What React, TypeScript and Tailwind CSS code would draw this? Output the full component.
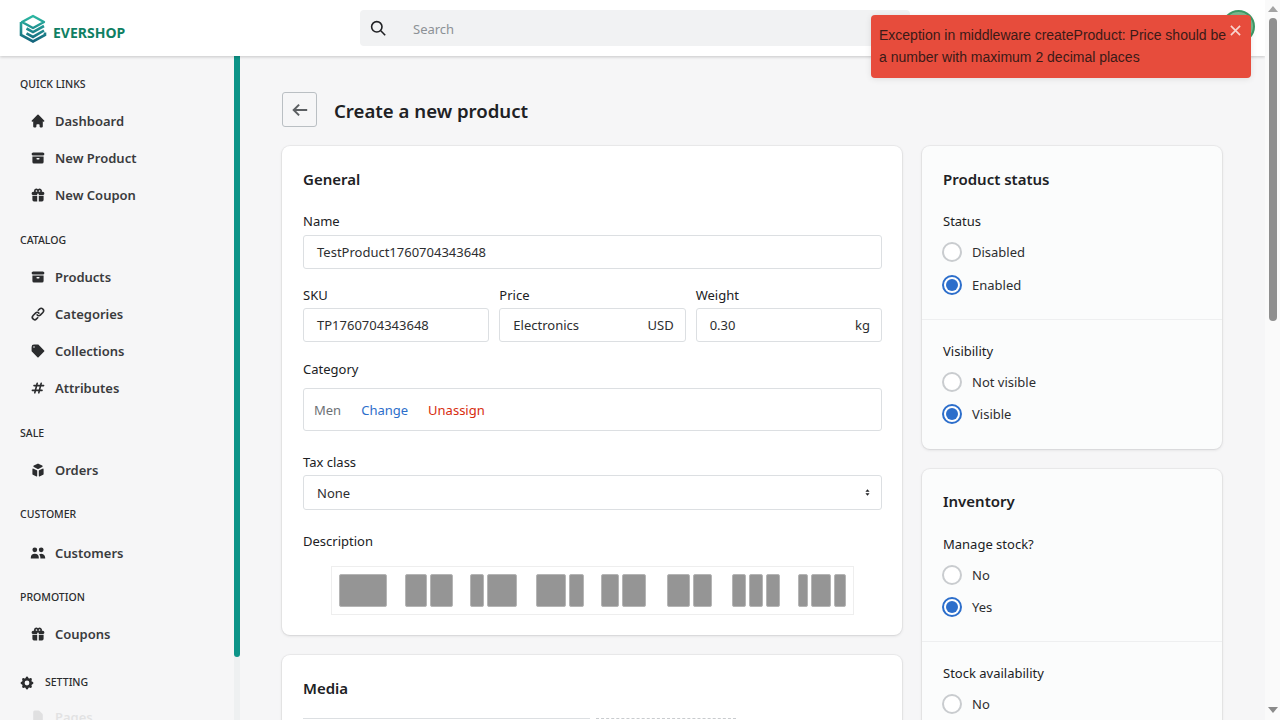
import React from "react";
import { HiHome, HiArchive, HiGift, HiLink, HiTag, HiHashtag, HiCube, HiUsers, HiCog, HiDocument } from "react-icons/hi";

const Logo = () => (
  <svg width="28" height="31" viewBox="0 0 28 30" fill="none">
    <defs>
      <linearGradient id="lg" x1="14" y1="0" x2="14" y2="30" gradientUnits="userSpaceOnUse">
        <stop offset="0" stopColor="#2ebfa5" />
        <stop offset="1" stopColor="#125f7a" />
      </linearGradient>
    </defs>
    <path d="M14 2.500 L25 8.500 L14 14.500 L3 8.500 Z" stroke="url(#lg)" strokeWidth="2.400" strokeLinejoin="round" />
    <path d="M2 8.500 V21.500 L14 28 L26 21.500 V19" stroke="url(#lg)" strokeWidth="2.600" />
    <path d="M7.500 15 L14 18.600 L25 12.500" stroke="url(#lg)" strokeWidth="2.600" />
    <path d="M7.500 19.800 L14 23.400 L25 17" stroke="url(#lg)" strokeWidth="2.600" />
  </svg>
);

const Item = ({ icon: Icon, label, cls = "" }: { icon: React.ComponentType<{ className?: string }>; label: string; cls?: string }) => (
  <div className={"h-[37.2px] flex items-center pl-[31px] gap-[10px] text-[13px] font-[600] text-[#3a3b3d] " + cls}>
    <span className="w-[14px] flex justify-center"><Icon className="w-[16px] h-[16px] shrink-0 text-[#2b2c2e]" /></span>
    <span className="mt-[2px]">{label}</span>
  </div>
);

const Group = ({ title, h, mt = "mt-[10px]", children }: { title: string; h: string; mt?: string; children: React.ReactNode }) => (
  <div className={h}>
    <div className="pl-[20px] text-[10.5px] font-[500] leading-[16px] text-[#2b2c2e]">{title}</div>
    <div className={mt}>{children}</div>
  </div>
);

const Label = ({ children, cls = "" }: { children: React.ReactNode; cls?: string }) => (
  <div className={"text-[13px] leading-[20px] text-[#202124] " + cls}>{children}</div>
);

const Box = ({ children, cls = "mt-[3px] h-[34px]" }: { children: React.ReactNode; cls?: string }) => (
  <div className={"border border-[#dcdfe2] rounded-[3px] bg-white flex items-center justify-between px-[13px] pt-[2px] text-[13px] text-[#2d2e30] " + cls}>{children}</div>
);

const Radio = ({ label, on, cls = "" }: { label: string; on?: boolean; cls?: string }) => (
  <div className={"-ml-[1px] flex items-center gap-[10px] h-[20px] text-[13px] text-[#2d2e30] " + cls}>
    <span className={"w-[20px] h-[20px] rounded-full border-2 bg-white flex items-center justify-center " + (on ? "border-[#2c6ecb]" : "border-[#c9cccf]")}>
      {on && <span className="w-[12px] h-[12px] rounded-full bg-[#2c6ecb]" />}
    </span>
    <span className="mt-[2px]">{label}</span>
  </div>
);

const Card = ({ children, cls = "" }: { children: React.ReactNode; cls?: string }) => (
  <div className={"rounded-[8px] shadow-[0_0_0_1px_rgba(63,63,68,0.05),0_1px_3px_0_rgba(63,63,68,0.15)] " + cls}>{children}</div>
);

const T = ({ w }: { w: number }) => (
  <span className="block h-[33px] rounded-[2px] bg-[#959595] border border-[#b5b5b5]" style={{ width: w }} />
);

const toolbar = [[48], [22, 23], [14, 30], [31, 15], [18, 24], [23, 19], [14, 14, 14], [10, 20, 12]];

const Heading = ({ children, cls = "" }: { children: React.ReactNode; cls?: string }) => (
  <div className={"text-[15px] font-[600] leading-[26px] text-[#202124] " + cls}>{children}</div>
);

export default function App() {
  return (
    <div className="h-screen w-full overflow-hidden flex bg-[#f6f6f7] font-['Noto_Sans','Open_Sans',sans-serif]">
      <div className="flex-1 min-w-0 flex flex-col relative">
        <header className="h-[56px] shrink-0 bg-white shadow-[0_1px_3px_rgba(0,0,0,0.2)] z-10 flex items-center relative">
          <div className="ml-[19px] flex items-center gap-[6px]">
            <Logo />
            <span className="text-[14px] font-[700] text-[#0f7f63] mt-[8px]">EVERSHOP</span>
          </div>
          <div className="absolute left-[360px] top-[10px] w-[550px] h-[36px] rounded-[4px] bg-[#f1f2f3] flex items-center pl-[10px] gap-[27px]">
            <svg className="w-[16px] h-[16px] text-[#202124]" viewBox="0 0 20 20" fill="none" stroke="currentColor" strokeWidth="2"><circle cx="8.500" cy="8.500" r="6.500" /><path d="M13.500 13.500 19 19" /></svg>
            <span className="text-[13px] text-[#8c9196] mt-[4px]">Search</span>
          </div>
          <div className="absolute left-[1222px] top-[10px] w-[33px] h-[33px] rounded-full border-2 border-[#3d9a66] bg-[#7cb98f]" />
        </header>
        <div className="flex-1 min-h-0 flex">
          <aside className="w-[240px] shrink-0 flex relative overflow-hidden bg-[#f6f6f7]">
            <div className="w-[234px] pt-[20px]">
              <Group title="QUICK LINKS" h="h-[156px]">
                <Item icon={HiHome} label="Dashboard" />
                <Item icon={HiArchive} label="New Product" />
                <Item icon={HiGift} label="New Coupon" />
              </Group>
              <Group title="CATALOG" h="h-[193px]">
                <Item icon={HiArchive} label="Products" />
                <Item icon={HiLink} label="Categories" />
                <Item icon={HiTag} label="Collections" />
                <Item icon={HiHashtag} label="Attributes" />
              </Group>
              <Group title="SALE" h="h-[81px]">
                <Item icon={HiCube} label="Orders" />
              </Group>
              <Group title="CUSTOMER" h="h-[83px]" mt="mt-[12px]">
                <Item icon={HiUsers} label="Customers" />
              </Group>
              <Group title="PROMOTION" h="h-[86px]">
                <Item icon={HiGift} label="Coupons" />
              </Group>
              <div className="pl-[19px] flex items-center gap-[10px] text-[10.5px] font-[500] text-[#2b2c2e] h-[16px]">
                <HiCog className="w-[16px] h-[16px] shrink-0 text-[#2b2c2e]" />
                <span>SETTING</span>
              </div>
              <Item icon={HiDocument} label="Pages" cls="mt-[7px] opacity-10" />
            </div>
            <div className="w-[6px] bg-[#eef0f1]">
              <div className="h-[601px] rounded-b-[3px] bg-[#0d9488]" />
            </div>
          </aside>
          <main className="flex-1 min-w-0 overflow-hidden pt-[36px] pl-[42px] pr-[42px]">
            <div className="flex items-center gap-[17px] h-[35px]">
              <div className="w-[35px] h-[35px] rounded-[3px] border border-[#babfc3] bg-[#f6f6f7] flex items-center justify-center">
                <svg className="w-[18px] h-[18px] text-[#5c5f62]" viewBox="0 0 20 20" fill="none" stroke="currentColor" strokeWidth="2.200"><path d="M18 10H3M9 4l-6 6 6 6" /></svg>
              </div>
              <h1 className="text-[18.6px] font-[600] text-[#202124] mt-[2px]">Create a new product</h1>
            </div>
            <div className="mt-[19px] flex gap-[20px] items-start">
              <div className="w-[620px] shrink-0">
                <Card cls="bg-white h-[489px] pl-[21px] pr-[20px] py-[20px]">
                  <Heading>General</Heading>
                  <Label cls="mt-[19px]">Name</Label>
                  <Box cls="mt-[4px] h-[34px]">TestProduct1760704343648</Box>
                  <div className="grid grid-cols-3 gap-[10px] mt-[16px]">
                    <div><Label>SKU</Label><Box>TP1760704343648</Box></div>
                    <div><Label>Price</Label><Box><span>Electronics</span><span className="-mr-[2px]">USD</span></Box></div>
                    <div><Label>Weight</Label><Box><span>0.30</span><span className="-mr-[2px]">kg</span></Box></div>
                  </div>
                  <Label cls="mt-[17px]">Category</Label>
                  <div className="mt-[9px] h-[43px] border border-[#dcdfe2] rounded-[3px] flex items-center pl-[10px] pt-[2px] gap-[20px] text-[13px]">
                    <span className="text-[#6d7175]">Men</span>
                    <span className="text-[#2c6ecb]">Change</span>
                    <span className="text-[#d72c0d]">Unassign</span>
                  </div>
                  <Label cls="mt-[21px]">Tax class</Label>
                  <Box cls="mt-[3px] h-[35px]">
                    <span>None</span>
                    <svg className="w-[5px] h-[7px] -mr-[2px] -mt-[2px] text-[#202124]" viewBox="0 0 6 8" fill="currentColor"><path d="M3 0l2.500 3h-5zM3 8 .5 5h5z" /></svg>
                  </Box>
                  <Label cls="mt-[21px]">Description</Label>
                  <div className="mt-[15px] ml-[28px] w-[523px] h-[49px] border border-[#eeeeee] flex items-center justify-between px-[7px]">
                    {toolbar.map((g, i) => (
                      <span key={i} className="flex gap-[3px] w-[48px]">{g.map((w, j) => <T key={j} w={w} />)}</span>
                    ))}
                  </div>
                </Card>
                <Card cls="bg-white mt-[20px] h-[200px] pl-[21px] pr-[20px] py-[20px]">
                  <Heading>Media</Heading>
                  <div className="mt-[17px] flex gap-[6px]">
                    <div className="w-[287px] h-[20px] border-t border-[#dcdfe2]" />
                    <div className="w-[140px] h-[20px] border-t border-dashed border-[#c9cccf]" />
                  </div>
                </Card>
              </div>
              <div className="w-[300px] shrink-0">
                <Card cls="bg-[#fbfcfc]">
                  <div className="pl-[21px] pr-[20px] py-[20px] h-[174px] border-b border-[#eeeff0]">
                    <Heading>Product status</Heading>
                    <Label cls="mt-[19px]">Status</Label>
                    <Radio label="Disabled" cls="mt-[11px]" />
                    <Radio label="Enabled" on cls="mt-[13px]" />
                  </div>
                  <div className="pl-[21px] pr-[20px] pt-[21px] h-[129px]">
                    <Label>Visibility</Label>
                    <Radio label="Not visible" cls="mt-[11px]" />
                    <Radio label="Visible" on cls="mt-[12px]" />
                  </div>
                </Card>
                <Card cls="bg-[#fbfcfc] mt-[20px]">
                  <div className="pl-[21px] pr-[20px] py-[20px] h-[173px] border-b border-[#eeeff0]">
                    <Heading cls="-mt-[1px]">Inventory</Heading>
                    <Label cls="mt-[20px]">Manage stock?</Label>
                    <Radio label="No" cls="mt-[11px]" />
                    <Radio label="Yes" on cls="mt-[12px]" />
                  </div>
                  <div className="pl-[21px] pr-[20px] pt-[21px] h-[100px]">
                    <Label>Stock availability</Label>
                    <Radio label="No" cls="mt-[11px]" />
                  </div>
                </Card>
              </div>
            </div>
          </main>
        </div>
        <div className="absolute left-[871px] top-[15px] w-[380px] h-[63px] z-20 rounded-[4px] bg-[#e74c3c] px-[8px] py-[9px] font-['Liberation_Sans',sans-serif] text-[14px] leading-[22px] text-[#3b1a17] shadow-[0_1px_6px_rgba(0,0,0,0.1)]">
          <div className="pr-[16px]">Exception in middleware createProduct: Price should be a number with maximum 2 decimal places</div>
          <svg className="absolute right-[10px] top-[10px] w-[11px] h-[11px] text-[#f9d5d0]" viewBox="0 0 12 12" stroke="currentColor" strokeWidth="1.800"><path d="M1 1l10 10M11 1 1 11" /></svg>
        </div>
      </div>
      <div className="w-[15px] shrink-0 bg-[#fafafa] flex flex-col items-center pt-[6px] z-30">
        <span className="w-0 h-0 border-x-[5px] border-x-transparent border-b-[6px] border-b-[#a3a3a3]" />
        <span className="mt-[6px] w-[8px] h-[303px] rounded-[4px] bg-[#8f8f8f]" />
        <span className="flex-1" />
        <span className="mb-[7px] w-0 h-0 border-x-[5px] border-x-transparent border-t-[6px] border-t-[#8a8a8a]" />
      </div>
    </div>
  );
}
